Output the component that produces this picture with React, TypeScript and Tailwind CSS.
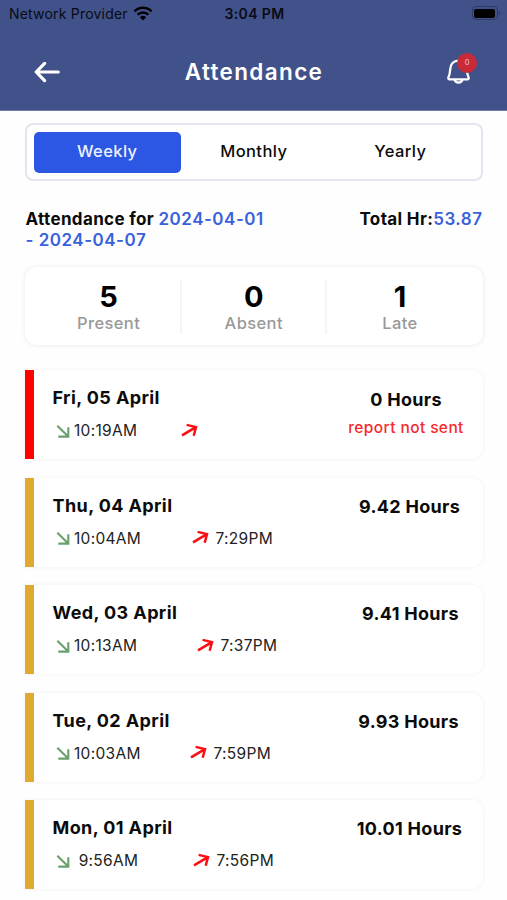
import clsx from "clsx";

type Day = {
  date: string;
  checkIn: string;
  checkOut?: string;
  hours: string;
  note?: string;
  inClass: string;
  hoursClass: string;
};

const tabs = ["Weekly", "Monthly", "Yearly"];

const stats = [
  { value: "5", label: "Present" },
  { value: "0", label: "Absent" },
  { value: "1", label: "Late" },
];

const days: Day[] = [
  { date: "Fri, 05 April", checkIn: "10:19AM", hours: "0", note: "report not sent", inClass: "w-[107px]", hoursClass: "w-[153px] pt-[18px]" },
  { date: "Thu, 04 April", checkIn: "10:04AM", checkOut: "7:29PM", hours: "9.42", inClass: "w-[118px]", hoursClass: "w-[146px] pt-[17px]" },
  { date: "Wed, 03 April", checkIn: "10:13AM", checkOut: "7:37PM", hours: "9.41", inClass: "w-[123px]", hoursClass: "w-[144px] pt-[17px]" },
  { date: "Tue, 02 April", checkIn: "10:03AM", checkOut: "7:59PM", hours: "9.93", inClass: "w-[116px]", hoursClass: "w-[148px] pt-[17px]" },
  { date: "Mon, 01 April", checkIn: " 9:56AM", checkOut: "7:56PM", hours: "10.01", inClass: "w-[119px]", hoursClass: "w-[146px] pt-[17px]" },
];

function WifiIcon() {
  return (
    <svg width="20" height="15" viewBox="0 0 20 15" className="ml-[5px] -mt-[2px]">
      <g fill="none" stroke="#000" strokeWidth="2.5">
        <path d="M1.4 5.3a12.4 12.4 0 0 1 17.2 0" />
        <path d="M4.6 8.6a7.8 7.8 0 0 1 10.8 0" />
      </g>
      <path d="M10 14.4 6.9 11.2a4.5 4.5 0 0 1 6.2 0z" />
    </svg>
  );
}

function StatusBar() {
  return (
    <div className="grid h-7 grid-cols-3 items-center pl-[9px] pr-[7px] text-[14px] text-[#080b14]">
      <div className="flex items-center whitespace-nowrap tracking-[0.2px]">
        <span className="-mt-[2px]">Network Provider</span>
        <WifiIcon />
      </div>
      <div className="-mt-[2px] text-center font-semibold tracking-[0.4px]">3:04 PM</div>
      <div className="-mt-[2px] flex items-center justify-end gap-px">
        <div className="h-[14px] w-[26px] rounded-[4px] border border-[#2d3a63] p-[1.5px]">
          <div className="h-full rounded-[2px] bg-black" />
        </div>
        <div className="h-1 w-[1.5px] rounded-r bg-[#2d3a63]" />
      </div>
    </div>
  );
}

function Header() {
  return (
    <header className="h-[111px] border-b border-[#6d78ad] bg-[#41528b]">
      <StatusBar />
      <div className="flex h-[88px] items-center justify-between px-[34px]">
        <svg width="27" height="22" viewBox="0 0 27 22" fill="none" stroke="#fff" strokeWidth="3.2" strokeLinecap="round" strokeLinejoin="round">
          <path d="M24.3 11H2.5M10.6 2.4 2.2 11l8.4 8.6" />
        </svg>
        <h1 className="ml-px text-[22.5px] font-semibold tracking-[1.35px] text-white">Attendance</h1>
        <div className="relative">
          <svg width="27" height="26" viewBox="0 0 27 26" fill="none" stroke="#fff" strokeWidth="2.3" strokeLinejoin="round">
            <path d="M12.5 1.6c-5 0-8 3.800-8.300 8.600-.2 3.600-.5 5.600-1.700 7.900-.6 1.200 0 2.200 1.200 2.200h17.600c1.200 0 1.800-1 1.200-2.200-1.200-2.300-1.500-4.300-1.700-7.900-.3-4.800-3.300-8.600-8.300-8.600z" />
            <path d="M8.7 20.800a3.900 3.700 0 0 0 7.600 0" />
          </svg>
          <span className="absolute -top-[6px] left-[11px] flex h-5 w-5 items-center justify-center rounded-full bg-[#c92a37] text-[7.5px] text-[#f3c9cf]">
            0
          </span>
        </div>
      </div>
    </header>
  );
}

function InArrow() {
  return (
    <svg width="15" height="15" viewBox="0 0 15 15" fill="none" stroke="#69a06e" strokeWidth="2.1">
      <path d="M1.3 1.7 12 12.2M12.3 3.2v9.4H2.3" />
    </svg>
  );
}

function OutArrow() {
  return (
    <svg width="17" height="15" viewBox="0 0 17 15" fill="none" stroke="#fb0d12" strokeWidth="2.5" className="-mt-[2px]">
      <path d="M1 12.3 14.5 4.3M5.6 1.900l9.400 2.200-2.300 8.600" />
    </svg>
  );
}

function DayCard({ day }: { day: Day }) {
  return (
    <div
      className={clsx(
        "flex h-[89px] justify-between rounded-r-[12px] border-l-[9px] bg-white pl-[18.5px] shadow-[0_0_4px_rgba(0,0,0,0.06)]",
        day.note ? "border-[#ff0000]" : "border-[#dfaa2f]",
      )}
    >
      <div className="pt-[16px]">
        <div className="text-[18px] font-bold leading-6 tracking-[0.4px]">{day.date}</div>
        <div className="mt-[11px] flex items-center pl-[3px] text-[15.5px] leading-5 tracking-[0.3px] text-[#222]">
          <div className={clsx("flex items-center gap-[3.5px]", day.inClass)}>
            <InArrow />
            <span className="whitespace-pre">{day.checkIn}</span>
          </div>
          <div className="ml-[18px] flex items-center gap-[7px]">
            <OutArrow />
            {day.checkOut}
          </div>
        </div>
      </div>
      <div className={clsx("text-center", day.hoursClass)}>
        <div className="text-[18px] font-bold leading-6 tracking-[0.3px]">{day.hours} Hours</div>
        {day.note && <div className="mt-[6px] text-[15.5px] font-medium leading-5 tracking-[0.4px] text-[#f52a2c]">{day.note}</div>}
      </div>
    </div>
  );
}

export default function App() {
  return (
    <div className="h-[900px] w-[507px] overflow-hidden bg-[#fefefe] font-['Inter',sans-serif] text-[#0b0b0b]">
      <Header />
      <main className="pl-[25px] pr-[24.5px] pt-[12px]">
        <div className="grid h-[58px] grid-cols-3 rounded-[8px] border-2 border-[#e4e4f1] bg-white px-[7px] pt-[7px] pb-[6px] text-[16.5px] font-medium tracking-[0.4px]">
          {tabs.map((tab, i) => (
            <button key={tab} className={clsx("rounded-[5px] pb-[2px]", i === 0 && "bg-[#2c57e4] text-[#eef1ff]")}>
              {tab}
            </button>
          ))}
        </div>

        <div className="mt-[27.5px] flex justify-between pl-[0.5px] text-[17px] font-bold leading-[21px] tracking-[0.35px]">
          <div className="w-[250px]">
            Attendance for{" "}
            <span className="font-semibold tracking-[0.5px] text-[#3961dc]">
              2024-04-01
              <br />- 2024-04-07
            </span>
          </div>
          <div>
            Total Hr:<span className="font-semibold tracking-[0.5px] text-[#3961dc]">53.87</span>
          </div>
        </div>

        <div className="mt-[16.5px] h-[78px] rounded-[12px] bg-white pl-[12px] pr-[10px] py-[14px] shadow-[0_0_5px_rgba(0,0,0,0.09)]">
          <div className="grid h-full grid-cols-3 divide-x-2 divide-[#f5f5f5]">
            {stats.map((s) => (
              <div key={s.label} className="-mt-px flex flex-col items-center">
                <div className="text-[29px] font-bold leading-[33px] text-black">{s.value}</div>
                <div className="text-[16.5px] font-medium leading-[21px] tracking-[0.4px] text-[#999]">{s.label}</div>
              </div>
            ))}
          </div>
        </div>

        <div className="mt-[25px] flex flex-col gap-[18.5px]">
          {days.map((day) => (
            <DayCard key={day.date} day={day} />
          ))}
        </div>
      </main>
    </div>
  );
}
